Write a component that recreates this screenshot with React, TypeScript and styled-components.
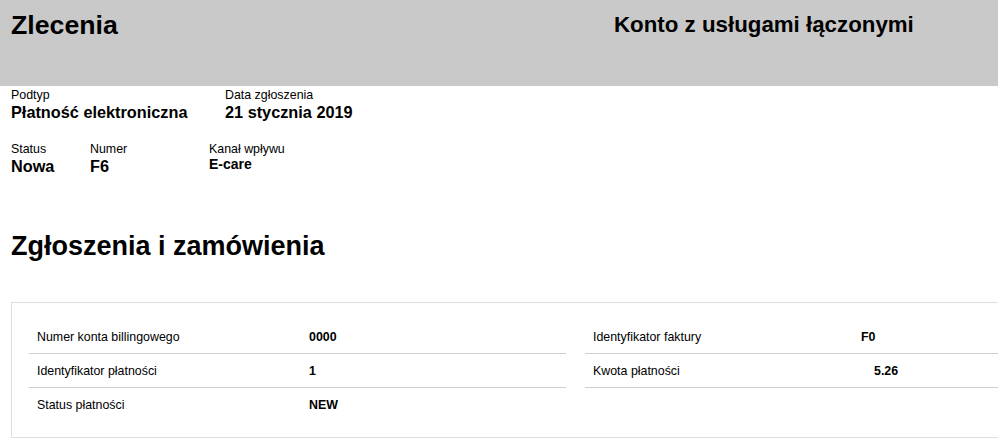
import React from 'react';
import styled, { createGlobalStyle } from 'styled-components';

const GlobalStyle = createGlobalStyle`
  html, body {
    margin: 0;
    padding: 0;
    background: #ffffff;
    overflow: hidden;
  }
  body {
    font-family: 'Liberation Sans', Arial, sans-serif;
    color: #000000;
  }
`;

const Page = styled.div`
  width: 998px;
  overflow: hidden;
`;

const Header = styled.header`
  display: grid;
  grid-template-columns: 603px 1fr;
  height: 86px;
  padding-left: 11px;
  background-color: #c9c9c9;
  box-sizing: border-box;
`;

const Title = styled.h1`
  margin: 0;
  padding-top: 10px;
  font-size: 26.7px;
  line-height: 31px;
  font-weight: bold;
`;

const AccountName = styled.h2`
  margin: 0;
  padding-top: 12px;
  font-size: 22.3px;
  line-height: 25px;
  font-weight: bold;
`;

const Summary = styled.section`
  display: flex;
  flex-direction: column;
  gap: 20px;
  padding: 2px 11px 0;
`;

const SummaryRow = styled.div`
  display: flex;
`;

const Field = styled.div<{ width: number }>`
  display: flex;
  flex-direction: column;
  width: ${(p) => p.width}px;
`;

const FieldLabel = styled.span`
  font-size: 12.4px;
  line-height: 14px;
`;

const FieldValue = styled.span<{ small?: boolean }>`
  font-size: ${(p) => (p.small ? '14px' : '16.3px')};
  line-height: ${(p) => (p.small ? '16px' : '20px')};
  font-weight: bold;
`;

const SectionTitle = styled.h2`
  margin: 55px 0 0;
  padding-left: 11px;
  font-size: 27px;
  line-height: 31px;
  font-weight: bold;
`;

const Card = styled.div`
  display: flex;
  gap: 19px;
  width: max-content;
  margin: 40px 0 0 11px;
  padding: 17px 17px 15px;
  border: 1px solid #dedede;
`;

const Column = styled.div`
  display: flex;
  flex-direction: column;
  width: 537px;
`;

const Row = styled.div<{ labelWidth: number; divider?: boolean }>`
  display: grid;
  grid-template-columns: ${(p) => p.labelWidth}px 1fr;
  align-items: center;
  height: 33px;
  padding-left: 8px;
  border-bottom: 1px solid ${(p) => (p.divider ? '#cfcfcf' : 'transparent')};
  font-size: 12.4px;
`;

const RowValue = styled.span<{ indent?: number }>`
  padding-left: ${(p) => p.indent ?? 0}px;
  font-weight: bold;
`;

const left = [
  { label: 'Numer konta billingowego', value: '0000' },
  { label: 'Identyfikator płatności', value: '1' },
  { label: 'Status płatności', value: 'NEW' },
];

const right = [
  { label: 'Identyfikator faktury', value: 'F0', indent: 0 },
  { label: 'Kwota płatności', value: '5.26', indent: 13 },
];

export default function App() {
  return (
    <Page>
      <GlobalStyle />
      <Header>
        <Title>Zlecenia</Title>
        <AccountName>Konto z usługami łączonymi</AccountName>
      </Header>

      <Summary>
        <SummaryRow>
          <Field width={214}>
            <FieldLabel>Podtyp</FieldLabel>
            <FieldValue>Płatność elektroniczna</FieldValue>
          </Field>
          <Field width={200}>
            <FieldLabel>Data zgłoszenia</FieldLabel>
            <FieldValue>21 stycznia 2019</FieldValue>
          </Field>
        </SummaryRow>
        <SummaryRow>
          <Field width={79}>
            <FieldLabel>Status</FieldLabel>
            <FieldValue>Nowa</FieldValue>
          </Field>
          <Field width={119}>
            <FieldLabel>Numer</FieldLabel>
            <FieldValue>F6</FieldValue>
          </Field>
          <Field width={200}>
            <FieldLabel>Kanał wpływu</FieldLabel>
            <FieldValue small>E-care</FieldValue>
          </Field>
        </SummaryRow>
      </Summary>

      <SectionTitle>Zgłoszenia i zamówienia</SectionTitle>

      <Card>
        <Column>
          {left.map((r, i) => (
            <Row key={r.label} labelWidth={272} divider={i < left.length - 1}>
              <span>{r.label}</span>
              <RowValue>{r.value}</RowValue>
            </Row>
          ))}
        </Column>
        <Column>
          {right.map((r) => (
            <Row key={r.label} labelWidth={268} divider>
              <span>{r.label}</span>
              <RowValue indent={r.indent}>{r.value}</RowValue>
            </Row>
          ))}
        </Column>
      </Card>
    </Page>
  );
}
